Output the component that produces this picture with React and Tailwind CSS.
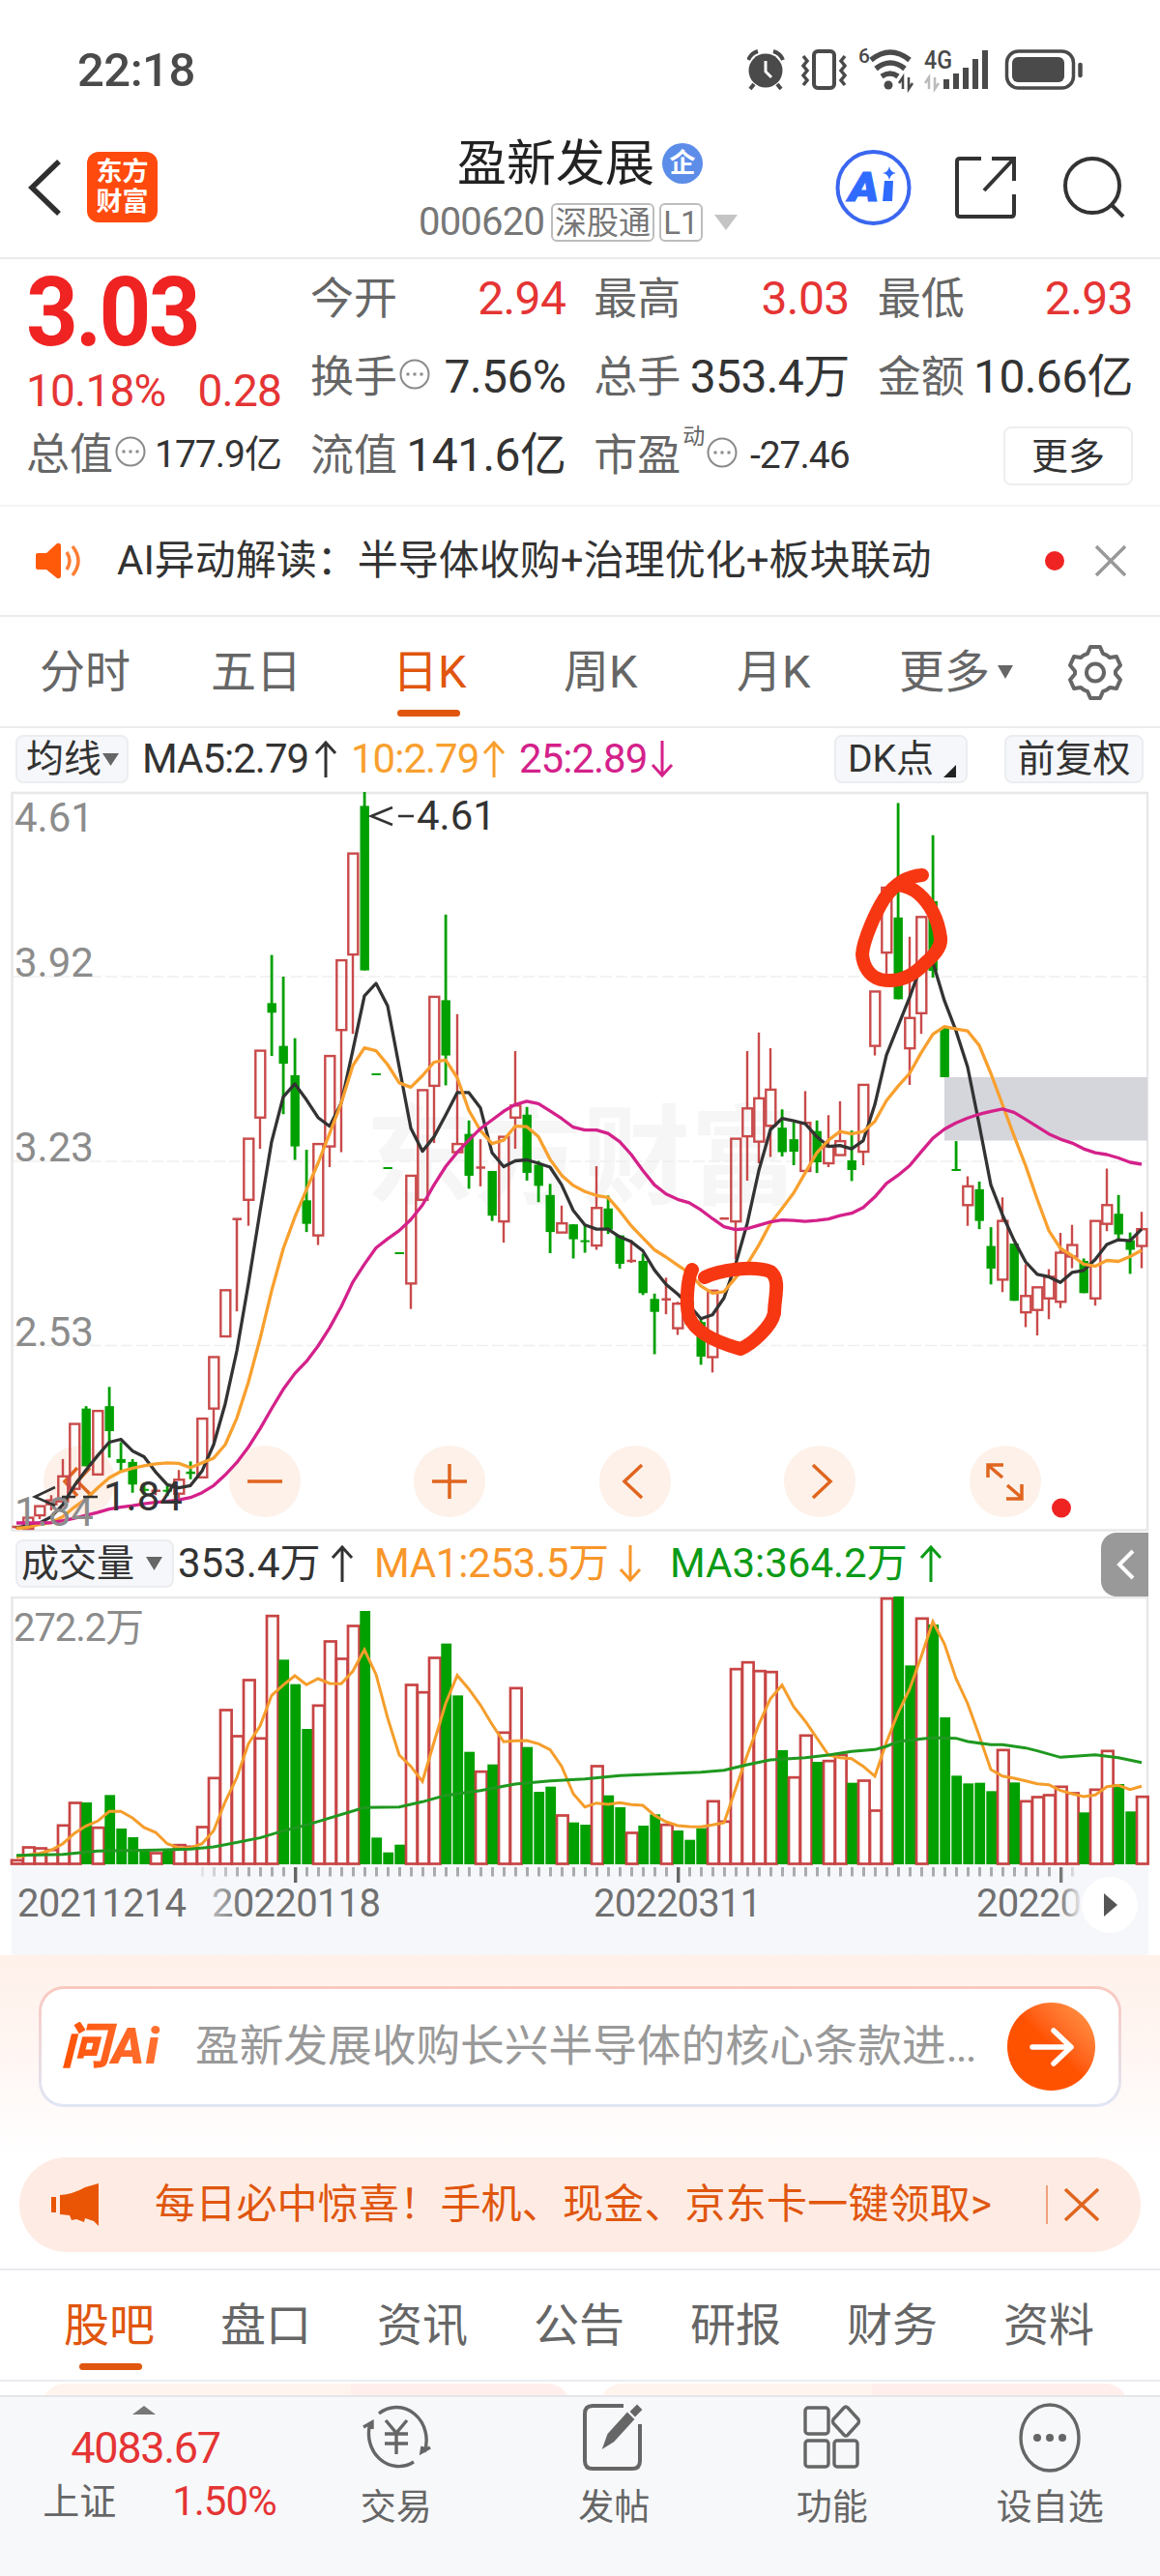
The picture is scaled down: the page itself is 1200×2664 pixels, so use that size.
const UP = '#00a000';
const RED = '#c94a4a';

// [kind, bodyTop, bodyBottom, high, low]
const CANDLES = [
  ['r', 1546, 1550], ['r', 1527, 1550], ['r', 1503, 1522, 1503, 1530], ['r', 1491, 1499, 1480, 1512],
  ['r', 1441, 1493, 1405, 1493], ['r', 1332, 1467], ['g', 1300, 1420, 1295, 1420], ['r', 1305, 1437],
  ['g', 1295, 1347, 1255, 1402], ['g', 1405, 1413, 1370, 1430], ['g', 1411, 1458, 1405, 1475], ['g', 1467, 1471, 1455, 1480],
  ['r', 1471, 1475, 1466, 1480], ['g', 1469, 1473, 1460, 1482], ['r', 1448, 1477, 1428, 1487], ['g', 1431, 1436, 1410, 1447],
  ['r', 1321, 1443], ['r', 1193, 1300, 1193, 1370], ['r', 1054, 1150], ['r', 906, 906, 906, 1098],
  ['r', 739, 866, 739, 920], ['r', 556, 695, 556, 760], ['g', 457, 477, 357, 567], ['g', 546, 583, 402, 688],
  ['g', 607, 755, 530, 783], ['g', 867, 916, 762, 933], ['r', 750, 940, 750, 960], ['r', 567, 755, 567, 798],
  ['r', 368, 513, 368, 767], ['r', 146, 356, 146, 521], ['g', 47, 389, 18, 389], ['g', 603, 607],
  ['g', 798, 802], ['g', 975, 979], ['r', 816, 1040, 816, 1093], ['r', 638, 866],
  ['r', 444, 629, 444, 748], ['g', 451, 566, 273, 628], ['r', 750, 767, 480, 767], ['g', 729, 816, 701, 843],
  ['r', 799, 799, 740, 838], ['g', 806, 899, 806, 910], ['r', 735, 911, 735, 955], ['r', 670, 695, 557, 760],
  ['g', 689, 810, 673, 826], ['g', 793, 837, 785, 871], ['g', 856, 933, 833, 977], ['r', 915, 934, 878, 934],
  ['g', 917, 948, 917, 988], ['g', 950, 954, 917, 976], ['r', 883, 961, 796, 970], ['g', 884, 928, 857, 937],
  ['g', 940, 999, 940, 1009], ['r', 993, 993, 950, 997], ['g', 993, 1060, 978, 1064], ['g', 1072, 1099, 1061, 1187],
  ['r', 1073, 1073, 1028, 1104], ['r', 1082, 1133, 1078, 1147], ['g', 1075, 1125], ['g', 1120, 1192, 1110, 1209],
  ['r', 1055, 1193, 1055, 1225], ['r', 905, 905], ['r', 739, 911, 739, 990], ['r', 676, 734, 557, 826],
  ['r', 655, 745, 518, 790], ['r', 637, 712, 551, 777], ['g', 716, 767, 678, 776], ['g', 740, 766, 705, 794],
  ['r', 706, 806, 640, 806], ['g', 723, 788, 701, 810], ['r', 755, 790, 690, 798], ['r', 744, 773, 661, 773],
  ['g', 784, 804, 722, 827], ['r', 627, 766, 627, 794], ['r', 433, 546, 433, 566], ['r', 217, 352, 217, 400],
  ['g', 279, 449, 41, 449], ['r', 488, 551, 319, 627], ['r', 278, 478, 278, 521], ['g', 245, 390, 108, 404],
  ['g', 509, 611], ['g', 802, 806, 744, 806], ['r', 838, 877, 817, 920], ['g', 844, 910, 828, 927],
  ['g', 962, 1009, 923, 1042], ['r', 910, 1032, 861, 1058], ['g', 957, 1076], ['r', 1066, 1100, 1000, 1131],
  ['r', 1048, 1095, 1048, 1148], ['r', 1026, 1071, 1010, 1114], ['r', 976, 1078, 935, 1091], ['r', 960, 984, 918, 1008],
  ['g', 993, 1060, 988, 1060], ['r', 910, 1071, 910, 1086], ['r', 877, 916, 801, 931], ['g', 895, 938, 856, 947],
  ['g', 950, 970, 934, 1020], ['r', 927, 962, 891, 1008],
];

const MA5 = [
  1548, 1543, 1538, 1525, 1500, 1460, 1428, 1398, 1370, 1364, 1388, 1400, 1432, 1458, 1465, 1460, 1430, 1375, 1290, 1180,
  1040, 890, 745, 652, 625, 658, 695, 713, 665, 555, 442, 416, 463, 590, 717, 765, 735, 690, 643, 643,
  675, 768, 797, 785, 783, 790, 798, 835, 888, 918, 927, 927, 943, 953, 972, 1012, 1042, 1062, 1085, 1113,
  1105, 1070, 1000, 915, 805, 720, 697, 702, 708, 735, 755, 753, 760, 743, 668, 565, 505, 445, 378, 372,
  452, 515, 590, 710, 835, 897, 950, 995, 1021, 1026, 1038, 1017, 1013, 990, 959, 949, 951, 927,
];
const MA10 = [
  1549, 1547, 1541, 1537, 1525, 1505, 1488, 1465, 1444, 1431, 1424, 1419, 1415, 1413, 1414, 1423, 1413, 1403, 1375, 1320,
  1245, 1155, 1055, 968, 902, 845, 790, 728, 665, 587, 550, 556, 585, 623, 632, 608, 580, 575, 612, 680,
  722, 749, 742, 713, 714, 735, 782, 815, 836, 849, 857, 861, 889, 920, 945, 970, 985, 1002, 1018, 1045,
  1060, 1057, 1028, 1000, 960, 915, 884, 852, 810, 768, 742, 724, 729, 724, 703, 660, 630, 603, 560, 522,
  506, 511, 515, 545, 603, 668, 733, 795, 865, 930, 967, 982, 1000, 1004, 992, 994, 984, 971,
];
const MA25 = [
  1538, 1538, 1538, 1537, 1533, 1528, 1522, 1516, 1509, 1505, 1502, 1498, 1495, 1493, 1490, 1485, 1475, 1460, 1438, 1412,
  1380, 1342, 1300, 1260, 1227, 1202, 1170, 1132, 1088, 1037, 1000, 966, 947, 930, 907, 877, 835, 797, 767, 742,
  718, 700, 682, 668, 661, 666, 681, 697, 715, 721, 721, 728, 745, 772, 805, 835, 854, 865, 872, 887,
  905, 922, 928, 926, 919, 912, 908, 909, 911, 909, 906, 899, 894, 882, 860, 832, 815, 795, 766, 738,
  719, 706, 696, 688, 682, 677, 684, 699, 714, 729, 740, 748, 760, 768, 772, 779, 788, 792,
];

const VOLUME = [
  1030, 990, 993, 998, 922, 852, 852, 929, 829, 933, 960, 1000, 1008, 998, 983, 988, 927, 775, 564, 645,
  471, 652, 272, 409, 485, 624, 550, 351, 405, 303, 258, 961, 1007, 983, 486, 509, 402, 359, 520, 695,
  755, 734, 634, 496, 680, 819, 803, 891, 914, 921, 738, 830, 867, 945, 924, 889, 920, 939, 968, 932,
  847, 910, 437, 416, 443, 446, 690, 773, 643, 726, 722, 703, 791, 783, 876, 218, 213, 427, 280, 300,
  588, 769, 793, 791, 817, 688, 790, 847, 834, 828, 802, 822, 883, 811, 691, 795, 880, 833,
];
const VOL_RED = 'rrrrrrgrggggrgrrrrrrrrrgggrrrrggggrrrgggrgrrgggrggrggrggrgggrrrrrrgrrgrrgrrrggrggggggrgrrrrrgrrggr';
const VOL_MA1 = [
  1022, 1015, 1010, 1000, 980, 948, 925, 910, 880, 880, 900, 930, 945, 980, 993, 993, 980, 940, 850, 775,
  670, 615, 520, 488, 459, 487, 468, 483, 484, 445, 378, 455, 590, 705, 740, 787, 665, 545, 458, 500,
  550, 610, 664, 661, 660, 670, 688, 740, 825, 866, 854, 858, 853, 859, 861, 892, 912, 924, 927, 928,
  922, 915, 810, 705, 610, 530, 488, 555, 600, 652, 705, 713, 716, 740, 771, 665, 575, 500, 400, 291,
  360, 468, 545, 645, 750, 770, 777, 785, 794, 797, 815, 825, 834, 829, 803, 799, 812, 802,
];
const VOL_MA3 = [
  [0, 1016], [4, 1013], [7, 1003], [12, 1000], [15, 997], [17, 990], [21, 962], [23, 940], [25, 922], [30, 868],
  [33, 866], [35, 850], [37, 830], [40, 815], [43, 795], [46, 785], [49, 779], [52, 769], [57, 761], [59, 758],
  [61, 752], [63, 735], [65, 720], [68, 713], [70, 705], [72, 694], [74, 688], [75, 678], [76, 663], [79, 651],
  [81, 653], [82, 663], [84, 673], [85, 673], [87, 683], [88, 692], [90, 712], [93, 704], [95, 713], [97, 728],
];

const cx = (i) => 17 + i * 12;
const py = (v) => (v - 18) * 0.4974;
const vy = (v) => (v - 213) / 3;
const line = (values, scale) => values.map((v, i) => `${cx(i)},${scale(v).toFixed(1)}`).join(' ');

function Candle({ i, data }) {
  const [kind, top, bottom, high = top, low = bottom] = data;
  const x = cx(i);
  if (kind === 'g') {
    return (
      <g fill={UP}>
        <rect x={x - 1.3} y={py(high)} width="2.8" height={py(low) - py(high)} />
        <rect x={x - 4.5} y={py(top)} width="9.4" height={py(bottom) - py(top)} />
      </g>
    );
  }
  if (bottom - top < 6) {
    return (
      <g stroke={RED} strokeWidth="2.5">
        <path d={`M${x - 4.5} ${py(top)}h9.5`} />
        <path d={`M${x} ${py(high)}V${py(low)}`} />
      </g>
    );
  }
  return (
    <g stroke={RED} strokeWidth="2.4" fill="none">
      <rect x={x - 4.7} y={py(top)} width="10" height={py(bottom) - py(top)} />
      <path d={`M${x} ${py(high)}V${py(top)}M${x} ${py(bottom)}V${py(low)}`} />
    </g>
  );
}

function KLineChart() {
  return (
    <svg className="relative block overflow-visible" width="1200" height="766" viewBox="0 0 1200 766" fontFamily="Roboto, sans-serif">
      <text x="378" y="418" fontSize="112" fontWeight="700" fill="#f6f6f7" fontFamily="'Noto Sans CJK SC', sans-serif">东方财富</text>
      <g stroke="#f0f0f0" strokeWidth="1.5" strokeDasharray="12 4">
        <path d="M13 191H1187M13 382H1187M13 572.5H1187" />
      </g>
      <rect x="12.5" y="1" width="1174.5" height="762.5" fill="none" stroke="#e8e8ea" strokeWidth="2.5" />
      <rect x="977" y="295" width="210" height="65.5" fill="#d5d6dc" />
      {CANDLES.map((c, i) => <Candle key={i} i={i} data={c} />)}
      <g fill="none" strokeWidth="3.3" strokeLinejoin="round">
        <polyline points={line(MA5, py)} stroke="#333333" />
        <polyline points={line(MA10, py)} stroke="#f8a02e" />
        <polyline points={line(MA25, py)} stroke="#d4218a" />
      </g>
      <g fontSize="42" fill="#8c8c8c">
        <text x="15" y="41">4.61</text>
        <text x="15" y="191">3.92</text>
        <text x="15" y="382">3.23</text>
        <text x="15" y="573">2.53</text>
        <text x="15" y="759">1.84</text>
      </g>
      <g fontSize="42" fill="#333333">
        <text x="431" y="39">4.61</text>
        <text x="107" y="743">1.84</text>
      </g>
      <g fill="none" stroke="#333333" strokeWidth="2.6">
        <path d="M406 16L384 25L406 34M412 25H428" />
        <path d="M57 719L36 729L57 738M64 729H78M86 729H101" />
      </g>
      <g fill="none" stroke="#f73712" strokeWidth="14" strokeLinecap="round" strokeLinejoin="round">
        <path d="M954 86C940 87 927 93 915 110C906 124 893 153 892 168C893 181 900 191 911 194C930 198 945 190 957 177C966 169 974 161 973 151C971 136 965 118 950 105C944 100 937 97 929 96" />
        <path d="M716 494C711 503 709 532 713 543C720 561 748 571 766 576C778 571 798 553 801 539C801 523 808 504 797 496C778 489 743 495 729 502" />
      </g>
      <circle cx="1098" cy="740.5" r="10" fill="#f02323" />
    </svg>
  );
}

function VolumeChart() {
  const ticks = [];
  for (let i = 16; i <= 91; i++) ticks.push(i);
  return (
    <svg className="block" width="1200" height="371" viewBox="0 0 1200 371">
      <defs>
        <linearGradient id="fadeL" x1="0" x2="1">
          <stop offset="0.3" stopColor="#f6f7fa" />
          <stop offset="1" stopColor="#f6f7fa" stopOpacity="0" />
        </linearGradient>
        <linearGradient id="fadeR" x1="0" x2="1">
          <stop offset="0" stopColor="#f6f7fa" stopOpacity="0" />
          <stop offset="0.8" stopColor="#f6f7fa" />
        </linearGradient>
      </defs>
      <path d="M12.5 277V1H1187V277" fill="none" stroke="#e8e8ea" strokeWidth="2.5" />
      <rect x="12" y="277" width="1176" height="94" fill="#f6f7fa" />
      {VOLUME.map((v, i) =>
        VOL_RED[i] === 'r' ? (
          <rect key={i} x={cx(i) - 5} y={vy(v) + 0.5} width="11.6" height={276 - vy(v)} fill="#fff" stroke="#c84444" strokeWidth="2.7" />
        ) : (
          <rect key={i} x={cx(i) - 4.7} y={vy(v)} width="10.8" height={277 - vy(v)} fill={UP} />
        )
      )}
      <polyline points={line(VOL_MA1, vy)} fill="none" stroke="#f59d2b" strokeWidth="3" />
      <polyline points={VOL_MA3.map(([i, v]) => `${cx(i)},${vy(v)}`).join(' ')} fill="none" stroke="#1f981f" strokeWidth="3" />
      {ticks.map((i) => {
        const major = i % 33 === 24;
        return <rect key={i} x={cx(i) - 1} y="280" width={major ? 3.4 : 3} height={major ? 16 : 9.5} fill={major ? '#666' : '#a9abae'} />;
      })}
      <g fontFamily="Roboto, 'Noto Sans CJK SC', sans-serif" fontSize="40" fill="#707070">
        <text x="219" y="331" textLength="175">20220118</text>
        <text x="614" y="331" textLength="174">20220311</text>
        <text x="1010" y="331" textLength="174">20220506</text>
        <rect x="170" y="279" width="80" height="90" fill="url(#fadeL)" />
        <rect x="1094" y="279" width="34" height="90" fill="url(#fadeR)" />
        <rect x="1121" y="279" width="66" height="90" fill="#f6f7fa" />
        <text x="18" y="331" textLength="175">20211214</text>
        <text x="14" y="46" fill="#8c8c8c" textLength="135">272.2万</text>
      </g>
      <circle cx="1148" cy="319" r="29" fill="#fff" />
      <path d="M1142 307L1156 319L1142 331Z" fill="#555" />
    </svg>
  );
}

function Arrow({ down }) {
  return (
    <svg className={down ? 'rotate-180' : ''} width="24" height="40" viewBox="0 0 24 40" fill="none" stroke="currentColor" strokeWidth="3">
      <path d="M12 39V3M2 14L12 3L22 14" />
    </svg>
  );
}

function Info() {
  return (
    <svg className="shrink-0" width="32" height="32" viewBox="0 0 32 32">
      <circle cx="16" cy="16" r="14.5" fill="none" stroke="#8a8a8a" strokeWidth="2" />
      <path d="M7.5 14.5h3v3h-3zM14.5 14.5h3v3h-3zM21.5 14.5h3v3h-3z" fill="#8a8a8a" />
    </svg>
  );
}

function StatusBar() {
  return (
    <div className="flex h-36 items-center pl-20 text-[#4a4a4a]">
      <span className="w-[693px] text-[49px] leading-none font-medium tracking-[-0.5px]">22:18</span>
      <svg width="350" height="48" viewBox="775 48 350 48" fill="none" stroke="#4a4a4a">
        <circle cx="794" cy="73" r="17.5" fill="#4a4a4a" stroke="none" />
        <path d="M776 62Q779 55 786 53M812 62Q809 55 802 53M782 87L778 92M806 87L810 92" strokeWidth="4" />
        <path d="M794 63V74L800 80" stroke="#fff" strokeWidth="3" />
        <rect x="844" y="53" width="21" height="38" rx="4" strokeWidth="4" />
        <path d="M833 58l4 5-4 5 4 5-4 5 4 5-4 5M876 58l-4 5 4 5-4 5 4 5-4 5 4 5" strokeWidth="3.5" />
        <path d="M903 62Q923 46 943 62M908 71Q923 59 938 71M914 79Q923 73 931 79" strokeWidth="5.5" />
        <circle cx="921" cy="88" r="4.5" fill="#4a4a4a" stroke="none" />
        <path d="M936 92V80L932 86M942 80V92L946 86" strokeWidth="2.5" />
        <path d="M963 92V80L959 86M969 80V92L973 86" stroke="#bbb" strokeWidth="2.5" />
        <path d="M981 92V82M991 92V76M1001 92V70M1011 92V61M1021 92V52" strokeWidth="6" />
        <rect x="1043.5" y="53" width="69" height="38" rx="12" strokeWidth="3.5" />
        <rect x="1049" y="59" width="54" height="26" rx="6" fill="#4a4a4a" stroke="none" />
        <path d="M1119.5 67V78" strokeWidth="4.5" strokeLinecap="round" />
        <g fill="#4a4a4a" stroke="none" fontFamily="Roboto, sans-serif" fontWeight="500">
          <text x="890" y="65" fontSize="21">6</text>
          <text x="958" y="71" fontSize="26" textLength="29" lengthAdjust="spacingAndGlyphs">4G</text>
        </g>
      </svg>
    </div>
  );
}

function Header() {
  return (
    <div className="flex h-[124px] items-start border-b-2 border-[#ebebeb]">
      <svg className="mt-[21px] ml-[29px]" width="34" height="58" viewBox="0 0 34 58" fill="none" stroke="#2f2f2f" strokeWidth="5.5">
        <path d="M32 2L4 29L32 56" />
      </svg>
      <div className="mt-[13px] ml-[27px] flex h-[73px] w-[73px] flex-col items-center justify-center rounded-xl bg-[#ff4a0d] text-[27px] leading-[31px] font-bold text-white">
        <span>东方</span>
        <span>财富</span>
      </div>
      <div className="ml-[270px] flex w-[330px] flex-col items-center">
        <div className="flex h-[50px] items-center gap-2 pl-1 text-[51px] leading-none text-[#222]">
          盈新发展
          <span className="flex h-[42px] w-[42px] items-center justify-center rounded-full bg-[#5c8de9] text-[27px] font-bold text-white">企</span>
        </div>
        <div className="mt-[15px] flex h-[42px] items-center text-[#777]">
          <span className="w-[137px] text-[40px] leading-none tracking-[-0.8px]">000620</span>
          <span className="flex h-10 w-[107px] items-center justify-center rounded-md border-2 border-[#bdbdbd] text-[33px] leading-none">深股通</span>
          <span className="ml-[5px] flex h-10 w-[45px] items-center justify-center rounded-md border-2 border-[#bdbdbd] text-[33px] leading-none">L1</span>
          <svg className="ml-3" width="24" height="16" viewBox="0 0 24 16"><path d="M0 0H24L12 16Z" fill="#c4c4c4" /></svg>
        </div>
      </div>
      <svg className="mt-[10px] ml-[101px]" width="79" height="80" viewBox="0 0 79 80">
        <circle cx="39.5" cy="40" r="37" fill="none" stroke="#3a66f0" strokeWidth="4" />
        <text x="14" y="54" fontSize="43" fontWeight="900" fontStyle="italic" fill="#2f6bff" stroke="#2f6bff" strokeWidth="1.2" textLength="31" lengthAdjust="spacingAndGlyphs" fontFamily="Roboto, sans-serif">A</text>
        <path d="M51 33h9l-1 21h-10z" fill="#2f6bff" />
        <path d="M56 18q1 6 7 7q-6 1-7 7q-1-6-7-7q6-1 7-7z" fill="#2f6bff" />
      </svg>
      <svg className="mt-[17px] ml-[45px]" width="64" height="66" viewBox="0 0 64 66" fill="none" stroke="#333" strokeWidth="4">
        <path d="M27 3H5Q2 3 2 6V60Q2 63 5 63H58Q61 63 61 60V40M30 36L60 4M38 3H61V26" />
      </svg>
      <svg className="mt-[17px] ml-[47px]" width="68" height="66" viewBox="0 0 68 66" fill="none" stroke="#333" strokeWidth="4">
        <circle cx="31" cy="31" r="28" />
        <path d="M50 50L63 63" />
      </svg>
    </div>
  );
}

function Stat({ label, value, info, red, small, sup }) {
  return (
    <div className="flex h-[60px] items-center justify-between leading-none">
      <div className="flex items-center text-[45px] text-[#666]">
        {label}
        {sup && <span className="mb-10 ml-0.5 text-[23px]">{sup}</span>}
        {info && <span className="mb-1.5 ml-0.5"><Info /></span>}
      </div>
      <span className={`${small ? 'text-[39px] tracking-[-1px]' : 'text-[48px] tracking-[-0.6px]'} ${red ? 'text-[#e53434]' : 'text-[#333]'}`}>{value}</span>
    </div>
  );
}

function Quote() {
  return (
    <div className="flex h-[256px] gap-[30px] border-b-2 border-[#f5f5f5] pt-[11px] pl-[27px]">
      <div className="w-[264px]">
        <div className="flex h-[86px] origin-left scale-x-93 items-center text-[101px] leading-none font-bold tracking-[-3px] text-[#f02323]">3.03</div>
        <div className="flex h-[78px] items-center justify-between text-[46px] leading-none tracking-[-0.8px] text-[#e53434]">
          <span>10.18%</span>
          <span>0.28</span>
        </div>
        <div className="-mt-[3px]"><Stat label="总值" value="177.9亿" info small /></div>
      </div>
      <div className="grid w-[851px] auto-rows-[81px] grid-cols-3 gap-x-[29px]">
        <Stat label="今开" value="2.94" red />
        <Stat label="最高" value="3.03" red />
        <Stat label="最低" value="2.93" red />
        <Stat label="换手" value="7.56%" info />
        <Stat label="总手" value="353.4万" />
        <Stat label="金额" value="10.66亿" />
        <Stat label="流值" value="141.6亿" />
        <Stat label="市盈" value="-27.46" info small sup="动" />
        <div className="flex justify-end">
          <span className="flex h-[61px] w-[134px] items-center justify-center rounded-lg border-2 border-[#eee] text-[38px] leading-none text-[#333]">更多</span>
        </div>
      </div>
    </div>
  );
}

function Notice() {
  return (
    <div className="flex h-[114px] items-center border-b-2 border-[#ebebeb] pl-[37px]">
      <svg width="48" height="38" viewBox="0 0 48 38">
        <path d="M2 11H11L22 1Q26 0 26 4V34Q26 38 22 37L11 28H2Q0 28 0 26V13Q0 11 2 11Z" fill="#ff5a0a" />
        <path d="M32 10Q38 19 32 28M38 4Q50 19 38 34" fill="none" stroke="#ff7d33" strokeWidth="3.5" />
      </svg>
      <span className="ml-[36px] w-[960px] text-[42px] leading-none text-[#333]">AI异动解读：半导体收购+治理优化+板块联动</span>
      <span className="h-5 w-5 rounded-full bg-[#f02323]" />
      <svg className="ml-8" width="32" height="32" viewBox="0 0 32 32" stroke="#999" strokeWidth="3.5"><path d="M1 1L31 31M31 1L1 31" /></svg>
    </div>
  );
}

function PeriodTabs() {
  return (
    <div className="flex h-[115px] items-center border-b-2 border-[#ebebeb] pl-[41px] text-[47px] leading-none text-[#666]">
      <span className="w-[177px]">分时</span>
      <span className="w-[188px]">五日</span>
      <span className="relative w-[177px] text-[#e0560e]">
        日K
        <i className="absolute -bottom-[23px] left-[5px] h-[7px] w-[65px] rounded-full bg-[#e0560e]" />
      </span>
      <span className="w-[179px]">周K</span>
      <span className="w-[168px]">月K</span>
      <span>更多</span>
      <svg className="mr-[57px] ml-2" width="16" height="14" viewBox="0 0 16 14"><path d="M0 0H16L8 14Z" fill="#666" /></svg>
      <svg width="56" height="58" viewBox="0 0 56 58" fill="none" stroke="#666" strokeWidth="4" strokeLinejoin="round">
        <path d="M23 3H33L36 10Q40 11 43 14L50 13L54 22L49 28V31L54 37L50 46L43 45Q40 48 36 49L33 56H23L20 49Q16 48 13 45L6 46L2 37L7 31V28L2 22L6 13L13 14Q16 11 20 10Z" />
        <circle cx="28" cy="29.5" r="9" />
      </svg>
    </div>
  );
}

const chip = 'flex h-[50px] items-center rounded-lg border-2 border-[#ebedf0] bg-[#f6f7fa] text-[39px] leading-none text-[#333]';

function MaBar() {
  return (
    <div className="flex h-[67px] items-start pt-[7px] pl-4 text-[42px] leading-none">
      <span className={`${chip} w-[117px] pl-[9px]`}>
        均线
        <svg className="ml-px" width="17" height="13" viewBox="0 0 17 13"><path d="M0 0H17L8.5 13Z" fill="#666" /></svg>
      </span>
      <span className="ml-3.5 flex h-[50px] w-[216px] items-center gap-1.5 tracking-[-1px] text-[#333]">MA5:2.79<Arrow /></span>
      <span className="flex h-[50px] w-[174px] items-center gap-1 tracking-[-1px] text-[#f8a02e]">10:2.79<Arrow /></span>
      <span className="flex h-[50px] w-[326px] items-center gap-1 tracking-[-1px] text-[#d4218a]">25:2.89<Arrow down /></span>
      <span className={`${chip} w-[138px] pl-3`}>
        DK点
        <svg className="mt-6 ml-2.5" width="13" height="13" viewBox="0 0 13 13"><path d="M13 0V13H0Z" fill="#222" /></svg>
      </span>
      <span className={`${chip} ml-[38px] w-[144px] justify-center`}>前复权</span>
    </div>
  );
}

function ChartButtons() {
  const icons = [
    'M35 23L22 37L35 52M48 23L35 37L50 52',
    'M19 37H55',
    'M19 37H55M37 19V55',
    'M44 20L26 37L44 54',
    'M30 20L48 37L30 54',
    'M19 33V20H35M20 21L34 33M39 41L54 54M38 55H54V40',
  ];
  return (
    <div className="absolute top-[676px] left-[45px] flex gap-[117.5px]">
      {icons.map((d) => (
        <span key={d} className="h-[74px] w-[74px] rounded-full bg-[#fdf1e9]">
          <svg width="74" height="74" viewBox="0 0 74 74" fill="none" stroke="#e0651f" strokeWidth="3.5"><path d={d} /></svg>
        </span>
      ))}
    </div>
  );
}

function VolumeBar() {
  return (
    <div className="flex h-[66px] items-start pl-4 text-[42px] leading-none">
      <span className={`${chip} mt-[7px] w-[164px] pl-1`}>
        成交量
        <svg className="ml-3" width="17" height="14" viewBox="0 0 17 14"><path d="M0 0H17L8.5 14Z" fill="#666" /></svg>
      </span>
      <span className="mt-[7px] ml-1 flex h-[50px] w-[203px] items-center gap-2.5 text-[#333]">353.4万<Arrow /></span>
      <span className="mt-[7px] flex h-[50px] w-[306px] items-center gap-2.5 tracking-[-0.3px] text-[#f8962a]">MA1:253.5万<Arrow down /></span>
      <span className="mt-[7px] flex h-[50px] w-[446px] items-center gap-3 text-[#0b9a16]">MA3:364.2万<Arrow /></span>
      <span className="flex h-[66px] w-[49px] items-center justify-center rounded-l-2xl bg-[#999]">
        <svg width="20" height="32" viewBox="0 0 20 32" fill="none" stroke="#fff" strokeWidth="4"><path d="M18 2L4 16L18 30" /></svg>
      </span>
    </div>
  );
}

function AskAi() {
  return (
    <div className="h-[209px] bg-linear-to-b from-[#fff1ea] via-[#fff6f3] to-white px-10 pt-8">
      <div className="rounded-[26px] bg-linear-to-b from-[#f9c9c0] to-[#dfe6f6] p-[3px]">
        <div className="flex h-[119px] items-center rounded-[23px] bg-white pl-5">
          <div className="flex w-[139px] items-center bg-linear-to-r from-[#ff5200] to-[#ff7a3a] bg-clip-text text-[51px] leading-none font-black tracking-[1.5px] text-transparent italic">问Ai</div>
          <span className="w-[840px] text-[45.7px] leading-none whitespace-nowrap text-[#999]">盈新发展收购长兴半导体的核心条款进<span className="tracking-[-2px]">...</span></span>
          <span className="flex h-[91px] w-[91px] items-center justify-center rounded-full bg-linear-to-tr from-[#ff5200] from-50% to-[#ff9a4a]">
            <svg width="46" height="40" viewBox="0 0 46 40" fill="none" stroke="#fff" strokeWidth="5.5" strokeLinecap="round" strokeLinejoin="round"><path d="M3 20H42M25 3L43 20L25 37" /></svg>
          </span>
        </div>
      </div>
    </div>
  );
}

function Promo() {
  return (
    <div className="mx-5 flex h-[98px] items-center rounded-full bg-[#feece4] pl-8 text-[#e0560e]">
      <svg width="52" height="44" viewBox="0 0 52 44" fill="#e95504">
        <path d="M1 14H6V30H1ZM10 12Q24 11 36 4L50 0V44L45 39L36 36L35 40L27 37L22 38L20 33L10 32Z" />
      </svg>
      <span className="ml-[56px] w-[922px] text-[42px] leading-none tracking-[0.2px] whitespace-nowrap">每日必中惊喜！手机、现金、京东卡一键领取&gt;</span>
      <span className="h-10 w-0.5 bg-[#efa27c]" />
      <svg className="ml-[17px]" width="36" height="34" viewBox="0 0 36 34" fill="none" stroke="#e0651f" strokeWidth="3.5"><path d="M1 1L35 33M35 1L1 33" /></svg>
    </div>
  );
}

function InfoTabs() {
  const tabs = ['股吧', '盘口', '资讯', '公告', '研报', '财务', '资料'];
  return (
    <div className="mt-[17px] flex h-[117px] items-center border-y-2 border-[#e9ebee] pl-[66px] text-[47px] leading-none text-[#666]">
      {tabs.map((t, i) => (
        <span key={t} className={i === 0 ? 'relative w-[162px] text-[#e0560e]' : 'w-[162px]'}>
          {t}
          {i === 0 && <i className="absolute -bottom-[23px] left-[16px] h-[7px] w-[65px] rounded-full bg-[#e0560e]" />}
        </span>
      ))}
    </div>
  );
}

function NavItem({ label, children }) {
  return (
    <div className="flex w-[225.5px] flex-col items-center">
      <svg className="mt-1.5" width="72" height="72" viewBox="0 0 72 72" fill="none" stroke="#666" strokeWidth="3.4">{children}</svg>
      <span className="mt-[18px] text-[37px] leading-none text-[#666]">{label}</span>
    </div>
  );
}

function BottomBar() {
  return (
    <div className="flex h-[188px] border-t-2 border-[#e4e6ea] bg-[#f7f8fa]">
      <div className="flex w-[297px] flex-col items-center">
        <svg className="mt-[9px]" width="24" height="9" viewBox="0 0 24 9"><path d="M0 9L12 0L24 9Z" fill="#777" /></svg>
        <span className="mt-3 ml-1 text-[45px] leading-none tracking-[-1.3px] text-[#e53434]">4083.67</span>
        <div className="mt-3 flex items-center pl-[33px] leading-none">
          <span className="w-[134px] text-[38px] text-[#666]">上证</span>
          <span className="text-[42px] tracking-[-1px] text-[#e53434]">1.50%</span>
        </div>
      </div>
      <NavItem label="交易">
        <path d="M18 11A31 34 0 0 1 65 51M54 61A31 34 0 0 1 9 21M2 25L11 20V27M71 46L62 51L63 45" />
        <path d="M25 18L36 31L47 18M36 31V53M24 32H48M24 42H48" />
      </NavItem>
      <NavItem label="发帖">
        <path d="M46 3H14Q6 3 6 11V60Q6 68 14 68H55Q63 68 63 60V22" strokeWidth="4" />
        <path d="M27 44L31 33L50 12L55 17L35 39Z" fill="#666" />
        <path d="M55 9L60 4L63 7L58 12Z" fill="#666" />
      </NavItem>
      <NavItem label="功能">
        <rect x="8" y="5" width="24" height="27" rx="3" />
        <rect x="8" y="39" width="24" height="27" rx="3" />
        <rect x="38" y="39" width="24" height="27" rx="3" />
        <path d="M48 5Q50 3 52 5L63 17Q64 19 63 21L52 33Q50 35 48 33L37 21Q36 19 37 17Z" />
      </NavItem>
      <NavItem label="设自选">
        <ellipse cx="36" cy="36" rx="30" ry="34" />
        <g fill="#666" stroke="none"><circle cx="23" cy="36" r="4" /><circle cx="36" cy="36" r="4" /><circle cx="49" cy="36" r="4" /></g>
      </NavItem>
    </div>
  );
}

export default function App() {
  return (
    <div className="h-[2664px] w-[1200px] overflow-hidden bg-white [font-family:Roboto,'Noto_Sans_CJK_SC',sans-serif]">
      <StatusBar />
      <Header />
      <Quote />
      <Notice />
      <PeriodTabs />
      <MaBar />
      <div className="relative -mt-px">
        {/* buttons sit under the candles */}
        <ChartButtons />
        <KLineChart />
      </div>
      <VolumeBar />
      <VolumeChart />
      <AskAi />
      <Promo />
      <InfoTabs />
      <div className="flex h-[14px] gap-[30px] overflow-hidden pt-[2px] pl-[43px]">
        <div className="h-12 w-[547px] rounded-t-3xl bg-linear-to-r from-[#fff4ee] from-[58.5%] to-[#ffeeec] to-[58.5%]" />
        <div className="h-12 w-[547px] rounded-t-3xl bg-linear-to-r from-[#fff4ee] from-[51.5%] to-[#ffeeec] to-[51.5%]" />
      </div>
      <BottomBar />
    </div>
  );
}
